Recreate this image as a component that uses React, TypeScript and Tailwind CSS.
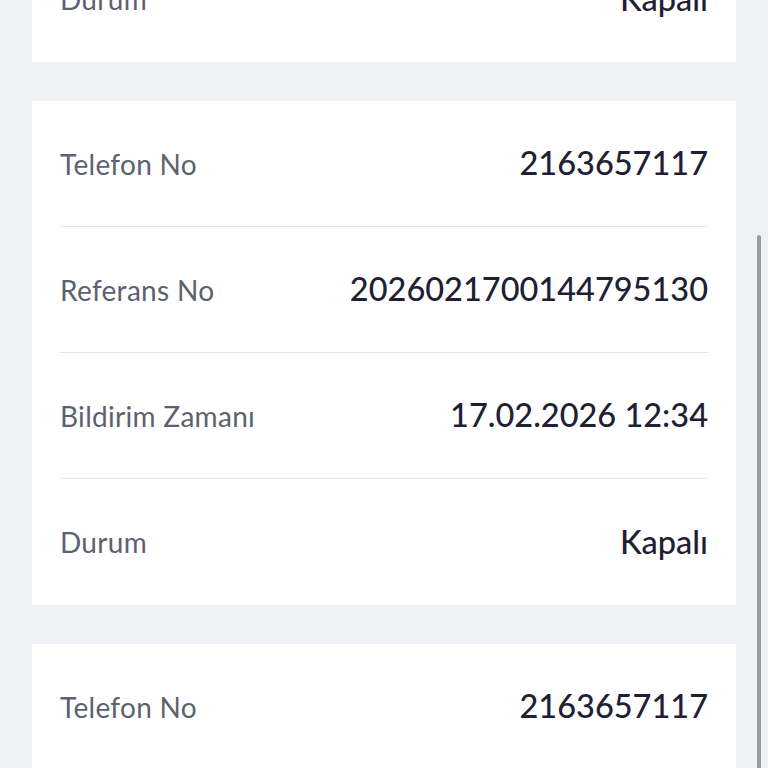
import React from 'react';

interface Row {
    label: string;
    value: string;
}

const record: Row[] = [
    { label: 'Telefon No', value: '2163657117' },
    { label: 'Referans No', value: '20260217001447951' + '30' },
    { label: 'Bildirim Zamanı', value: '17.02.2026 12:34' },
    { label: 'Durum', value: 'Kapalı' },
];

function DetailCard({ rows }: { rows: Row[] }) {
    return (
        <div className="bg-white px-[28px]">
            {rows.map((row, i) => (
                <div
                    key={row.label}
                    className={
                        'flex h-[126px] items-center justify-between ' +
                        (i < rows.length - 1 ? 'border-b border-[#e3e5eb]' : '')
                    }
                >
                    <span className="text-[28px] tracking-[0.3px] text-[#5c6170]">{row.label}</span>
                    <span className="text-[32.5px] font-medium text-[#1e2133]">{row.value}</span>
                </div>
            ))}
        </div>
    );
}

export default function App() {
    return (
        <div
            className="relative h-[768px] w-[768px] overflow-hidden bg-[#f0f1f5]"
            style={{ fontFamily: 'Lato, "Noto Sans", sans-serif' }}
        >
            <div className="-mt-[442px] flex flex-col gap-[39px] px-[32px]">
                <DetailCard rows={record} />
                <DetailCard rows={record} />
                <DetailCard rows={record} />
            </div>

            {/* scroll indicator */}
            <div className="absolute right-[7px] top-[235px] h-[560px] w-[4px] rounded-full bg-[#9a9a9e]" />
        </div>
    );
}
